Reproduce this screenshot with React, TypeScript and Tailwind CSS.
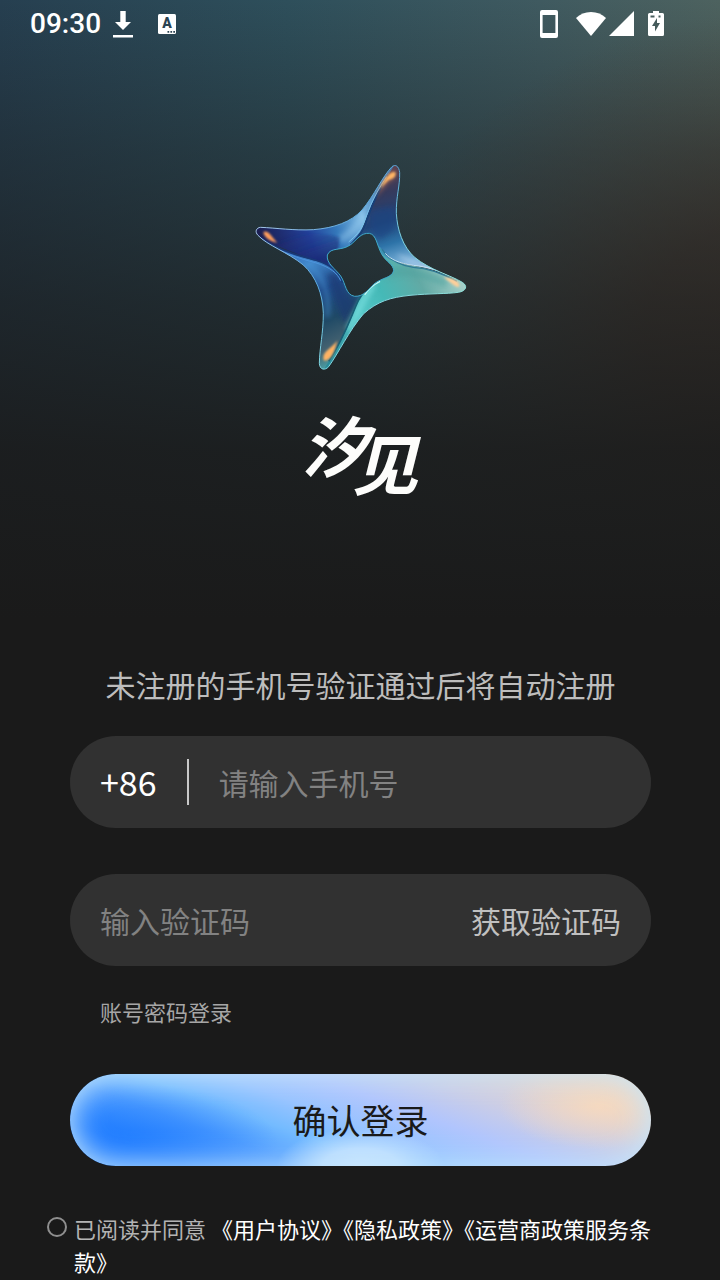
import { useState } from "react";

function StatusBar() {
  return (
    <header className="flex h-12 items-center justify-between pl-[30px] pr-14 text-white">
      <div className="flex items-center">
        <span className="font-[Roboto,sans-serif] text-[28px] font-medium leading-8">09:30</span>
        <svg className="ml-3 h-7 w-5" viewBox="0 0 20 28" fill="currentColor">
          <path d="M7.300 1h5.400v11h5.300l-8 8-8-8h5.300zM0 25h20v2.500H0z" />
        </svg>
        <svg className="ml-6 h-5 w-5" viewBox="0 0 20 20">
          <rect x="1" width="18" height="20" rx="1.500" fill="#fff" />
          <text x="10" y="14" textAnchor="middle" className="font-[Roboto,sans-serif] text-[14px] font-black" fill="#2b4351">
            A
          </text>
          <path d="M10.500 17h1.700v1.700h-1.700zM13.400 17h1.700v1.700h-1.700zM16.300 17H18v1.700h-1.700z" fill="#2b4351" />
        </svg>
      </div>
      <div className="flex items-center">
        <svg className="h-7 w-[18px]" viewBox="0 0 18 28" fill="currentColor" fillRule="evenodd">
          <path d="M2 0h14a2 2 0 0 1 2 2v24a2 2 0 0 1-2 2H2a2 2 0 0 1-2-2V2a2 2 0 0 1 2-2zM2.600 5v18h12.800V5z" />
        </svg>
        <svg className="ml-[18px] h-[26px] w-[30px]" viewBox="0 0 30 26" fill="currentColor">
          <path d="M15 25 0 7C4 3 9 1 15 1s11 2 15 6z" />
        </svg>
        <svg className="ml-[3px] h-[26px] w-[25px]" viewBox="0 0 25 26" fill="currentColor">
          <path d="M25 0v25H0z" />
        </svg>
        <svg className="ml-[14px] h-[26px] w-4" viewBox="0 0 16 26" fill="currentColor" fillRule="evenodd">
          <path d="M5 0h6v2h3.500a1.500 1.500 0 0 1 1.500 1.500v20a1.500 1.500 0 0 1-1.500 1.500h-13A1.500 1.500 0 0 1 0 23.500v-20A1.500 1.500 0 0 1 1.500 2H5zM2.500 4.500v2h4v-2zM10.500 4.500v2h2v-2zM9 7l-5 8h3v5.500l5-8.500H9z" />
        </svg>
      </div>
    </header>
  );
}

// glass star: four facets, each one runs from one tip to the next
function StarLogo() {
  return (
    <svg className="h-[235px] w-60" viewBox="0 0 720 705" fill="none" aria-hidden="true">
      <defs>
        <linearGradient id="fa" gradientUnits="userSpaceOnUse" x1="60" y1="250" x2="430" y2="120">
          <stop offset="0" stopColor="#1c1f52" />
          <stop offset=".35" stopColor="#22409a" />
          <stop offset=".56" stopColor="#3478ba" />
          <stop offset=".78" stopColor="#7db9e3" />
          <stop offset="1" stopColor="#3f78b4" />
        </linearGradient>
        <linearGradient id="fashade" gradientUnits="userSpaceOnUse" x1="190" y1="240" x2="225" y2="345">
          <stop offset="0" stopColor="#1c2f80" stopOpacity="0" />
          <stop offset="1" stopColor="#1a256b" />
        </linearGradient>
        <linearGradient id="fb" gradientUnits="userSpaceOnUse" x1="460" y1="50" x2="560" y2="370">
          <stop offset="0" stopColor="#5c4250" />
          <stop offset=".2" stopColor="#363a5c" />
          <stop offset=".45" stopColor="#224478" />
          <stop offset=".65" stopColor="#2d73a8" />
          <stop offset=".85" stopColor="#7db4dc" />
          <stop offset="1" stopColor="#b5cde8" />
        </linearGradient>
        <linearGradient id="fc" gradientUnits="userSpaceOnUse" x1="670" y1="400" x2="270" y2="620">
          <stop offset="0" stopColor="#a5d0c9" />
          <stop offset=".25" stopColor="#62aaa5" />
          <stop offset=".5" stopColor="#45b9b7" />
          <stop offset=".7" stopColor="#55c8c8" />
          <stop offset="1" stopColor="#2b8d9a" />
        </linearGradient>
        <linearGradient id="fd" gradientUnits="userSpaceOnUse" x1="120" y1="300" x2="290" y2="650">
          <stop offset="0" stopColor="#356bc0" />
          <stop offset=".2" stopColor="#4187ca" />
          <stop offset=".42" stopColor="#214d8c" />
          <stop offset=".65" stopColor="#204a66" />
          <stop offset=".85" stopColor="#466371" />
          <stop offset="1" stopColor="#4aa9ad" />
        </linearGradient>
        <linearGradient id="rim" gradientUnits="userSpaceOnUse" x1="60" y1="200" x2="600" y2="560">
          <stop offset="0" stopColor="#a9c8ec" />
          <stop offset=".4" stopColor="#5ba9dc" />
          <stop offset=".6" stopColor="#7fd5e2" />
          <stop offset="1" stopColor="#8ee0d8" />
        </linearGradient>
        <filter id="soft3" x="-50%" y="-50%" width="200%" height="200%">
          <feGaussianBlur stdDeviation="3" />
        </filter>
        <filter id="soft8" x="-50%" y="-50%" width="200%" height="200%">
          <feGaussianBlur stdDeviation="8" />
        </filter>
        <clipPath id="star">
          <path
            clipRule="evenodd"
            d="M456 50C428 78 402 138 366 180C334 216 282 234 220 239C160 242 110 234 62 232C48 233 44 246 54 256C82 286 142 306 190 345C228 380 248 430 250 490C250 550 239 590 238 640C239 660 255 662 266 650C296 608 326 544 370 492C412 454 452 442 510 436C570 430 620 432 655 427C679 423 684 408 667 397C632 376 570 360 524 322C488 290 472 240 469 190C468 140 480 108 479 68C477 48 466 42 456 50ZM262 315C272 290 305 304 332 284C350 270 362 248 388 250C410 254 410 286 425 312C438 336 460 342 461 362C456 384 426 382 402 402C384 418 372 440 344 439C316 434 318 402 302 378C286 356 258 340 262 315Z"
          />
        </clipPath>
      </defs>
      <g clipPath="url(#star)">
        <path d="M400 250H480V400H400Z" fill="#3f93b4" />
        <path d="M220 280H360V460H220Z" fill="#244a8c" />
        <path d="M480 40L44 220L40 262L190 318L252 340L300 384L262 318L340 282C372 250 372 190 446 74Z" fill="url(#fa)" />
        <path d="M100 262C160 252 240 246 300 262L290 320L262 345L180 322L60 268Z" fill="url(#fashade)" opacity=".8" filter="url(#soft3)" />
        <path d="M466 40C412 130 390 170 376 226C368 250 352 264 338 284L420 290L440 320C490 348 550 346 600 366L690 404L520 250L490 40Z" fill="url(#fb)" />
        <path d="M424 308C450 344 520 342 580 362L690 404L690 440L400 520L262 670L240 655C310 570 330 500 350 458C366 428 390 400 410 396L450 366Z" fill="url(#fc)" />
        <path d="M48 254C100 296 160 314 220 330C272 344 296 362 308 390L326 432L350 442L364 436C340 478 330 530 290 592L250 662L220 660L225 430Z" fill="url(#fd)" />

        <path d="M196 334C240 366 272 420 262 500" stroke="#4b9ada" strokeWidth="14" opacity=".4" filter="url(#soft8)" />
        <path d="M290 372C318 432 328 450 350 450L318 520C296 500 280 430 262 370Z" fill="#1b3a73" opacity=".7" filter="url(#soft8)" />
        <path d="M372 190C360 222 340 246 300 270" stroke="#a1d4f5" strokeWidth="24" opacity=".4" filter="url(#soft8)" />
        <path d="M392 180C382 220 390 240 420 268L462 240L462 170Z" fill="#1e4482" opacity=".65" filter="url(#soft8)" />
        <path d="M530 336L470 312C480 325 500 336 540 344Z" fill="#c7dcf3" opacity=".7" filter="url(#soft8)" />
        <path d="M400 404C372 440 352 486 326 540" stroke="#79dfdf" strokeWidth="20" opacity=".65" filter="url(#soft8)" />
        <path d="M440 376C490 352 560 376 620 400" stroke="#4fa29f" strokeWidth="24" opacity=".55" filter="url(#soft8)" />

        {/* creases */}
        <path d="M446 76C400 140 388 190 376 222C366 250 350 264 332 284" stroke="#173f78" strokeWidth="6" />
        <path d="M440 80C394 148 382 192 370 222C360 246 346 258 326 276" stroke="#78bfe8" strokeWidth="3" />
        <path d="M60 262C120 304 180 318 226 330C276 346 300 366 308 398" stroke="#183878" strokeWidth="5" />
        <path d="M64 270C120 308 180 326 226 338C272 352 292 370 302 392" stroke="#4d94dd" strokeWidth="3" />
        <path d="M650 394C600 366 560 354 520 352C476 346 448 330 426 298" stroke="#2f7996" strokeWidth="4" />
        <path d="M650 388C600 360 560 350 520 346C476 340 452 328 436 310" stroke="#c5e0f2" strokeWidth="3" />
        <path d="M266 634C316 560 336 490 356 450C370 424 390 404 412 396" stroke="#175f76" strokeWidth="5" />
        <path d="M374 434C382 420 396 406 420 394" stroke="#c6f4f0" strokeWidth="5" />

        {/* warm lights in the tips */}
        <path d="M464 60C470 82 456 90 446 92L404 144C420 106 438 70 464 60Z" fill="#ec8a50" opacity=".55" filter="url(#soft8)" />
        <path d="M466 66C470 82 458 86 446 90L420 116C428 96 446 62 466 66Z" fill="#ffb565" filter="url(#soft3)" />
        <path d="M70 246C84 238 96 262 112 278C94 276 72 264 70 246Z" fill="#ff9d5c" filter="url(#soft3)" />
        <path d="M658 410C648 416 634 398 610 382C638 382 660 394 658 410Z" fill="#ffcf9a" filter="url(#soft3)" />
        <path d="M252 632C244 606 266 602 292 572C284 604 272 634 252 632Z" fill="#ffb263" filter="url(#soft3)" />
      </g>
      <path
        stroke="url(#rim)"
        strokeWidth="3"
        d="M456 50C428 78 402 138 366 180C334 216 282 234 220 239C160 242 110 234 62 232C48 233 44 246 54 256C82 286 142 306 190 345C228 380 248 430 250 490C250 550 239 590 238 640C239 660 255 662 266 650C296 608 326 544 370 492C412 454 452 442 510 436C570 430 620 432 655 427C679 423 684 408 667 397C632 376 570 360 524 322C488 290 472 240 469 190C468 140 480 108 479 68C477 48 466 42 456 50Z"
      />
      <path
        stroke="#3fa9c8"
        strokeWidth="3"
        d="M262 315C272 290 305 304 332 284C350 270 362 248 388 250C410 254 410 286 425 312C438 336 460 342 461 362C456 384 426 382 402 402C384 418 372 440 344 439C316 434 318 402 302 378C286 356 258 340 262 315Z"
      />
    </svg>
  );
}

function Wordmark() {
  return (
    <h1 className="flex h-[104px] items-start justify-center text-[66px] font-bold italic leading-[76px] text-[#fdfdfb]">
      <span>汐</span>
      <span className="-ml-4 pt-[18px]">见</span>
    </h1>
  );
}

export default function App() {
  const [agreed, setAgreed] = useState(false);

  return (
    <main className="min-h-screen bg-[#1a1a1a] font-['Noto_Sans_CJK_SC',sans-serif] bg-[linear-gradient(180deg,rgba(26,26,26,0)_0px,rgba(26,26,26,0.36)_150px,rgba(26,26,26,0.66)_300px,rgba(26,26,26,0.9)_450px,#1a1a1a_620px),radial-gradient(420px_320px_at_110%_330px,#4c4239_0%,rgba(74,64,56,0.85)_35%,rgba(74,64,56,0.35)_70%,rgba(74,64,56,0)_100%),linear-gradient(90deg,#263f50_0%,#2e4f5b_40%,#3f5a60_75%,#4d625f_100%)]">
      <StatusBar />

      <section className="flex flex-col items-center pt-[102px]">
        <StarLogo />
        <div className="pt-5">
          <Wordmark />
        </div>
      </section>

      <form className="pl-[70px] pr-[69px] pt-[153px]" onSubmit={(e) => e.preventDefault()}>
        <p className="text-center text-[30px] leading-[44px] text-[#bdbdbd]">未注册的手机号验证通过后将自动注册</p>

        <div className="mt-[30px] flex h-[92px] items-center gap-[30px] rounded-full bg-[#313131] px-[30px]">
          <label htmlFor="phone" className="text-[34px] leading-[44px] text-white">+86</label>
          <span className="h-[46px] w-[2px] bg-[#c8c8c8]" />
          <input
            id="phone"
            type="tel"
            aria-label="请输入手机号"
            placeholder="请输入手机号"
            className="min-w-0 flex-1 bg-transparent text-[30px] leading-[44px] text-white outline-none placeholder:text-[#828282]"
          />
        </div>

        <div className="mt-[46px] flex h-[92px] items-center rounded-full bg-[#313131] px-[30px]">
          <input
            type="text"
            aria-label="输入验证码"
            placeholder="输入验证码"
            className="min-w-0 flex-1 bg-transparent text-[30px] leading-[44px] text-white outline-none placeholder:text-[#828282]"
          />
          <button type="button" className="text-[30px] leading-[44px] text-[#c0c0c0]">获取验证码</button>
        </div>

        <button type="button" className="ml-[30px] mt-[29px] block text-[22px] leading-[33px] text-[#a6a6a6]">
          账号密码登录
        </button>

        <button
          type="submit"
          className="mt-[46px] block h-[92px] w-full rounded-full text-[34px] leading-[44px] text-[#1a1a1a] shadow-[inset_0_0_30px_2px_#c4e6fc] bg-[radial-gradient(84px_38px_at_50%_100%,#c8e4ff_0%,rgba(200,228,255,0.85)_45%,rgba(200,228,255,0.3)_80%,rgba(200,228,255,0)_100%),radial-gradient(100px_44px_at_91%_34%,rgba(250,218,187,0.8)_0%,rgba(250,218,187,0)_100%),radial-gradient(150px_60px_at_10%_75%,rgba(24,119,255,0.6)_0%,rgba(24,119,255,0)_100%),linear-gradient(20deg,#2580ff_14%,#4c9bff_28%,#74bbff_38%,#98c3ff_48%,#b1c5fd_59%,#cbcde6_71%,#e6d4cc_86%,#f5d9c0_100%)]"
        >
          确认登录
        </button>
      </form>

      <div className="flex items-start gap-[7px] pl-[47px] pr-[68px] pt-[46px]">
        <input
          id="agree"
          type="checkbox"
          checked={agreed}
          onChange={(e) => setAgreed(e.target.checked)}
          className="mt-[5px] h-5 w-5 shrink-0 appearance-none rounded-full border-2 border-[#8f8f8f] checked:bg-[#4a97ff]"
        />
        <div className="text-[22px] leading-[33px] text-white">
          <label htmlFor="agree" className="text-[#b4b4b4]">已阅读并同意</label>{" "}
          <a href="#user">《用户协议》</a>
          <a href="#privacy">《隐私政策》</a>
          <a href="#carrier">《运营商政策服务条款》</a>
        </div>
      </div>
    </main>
  );
}
